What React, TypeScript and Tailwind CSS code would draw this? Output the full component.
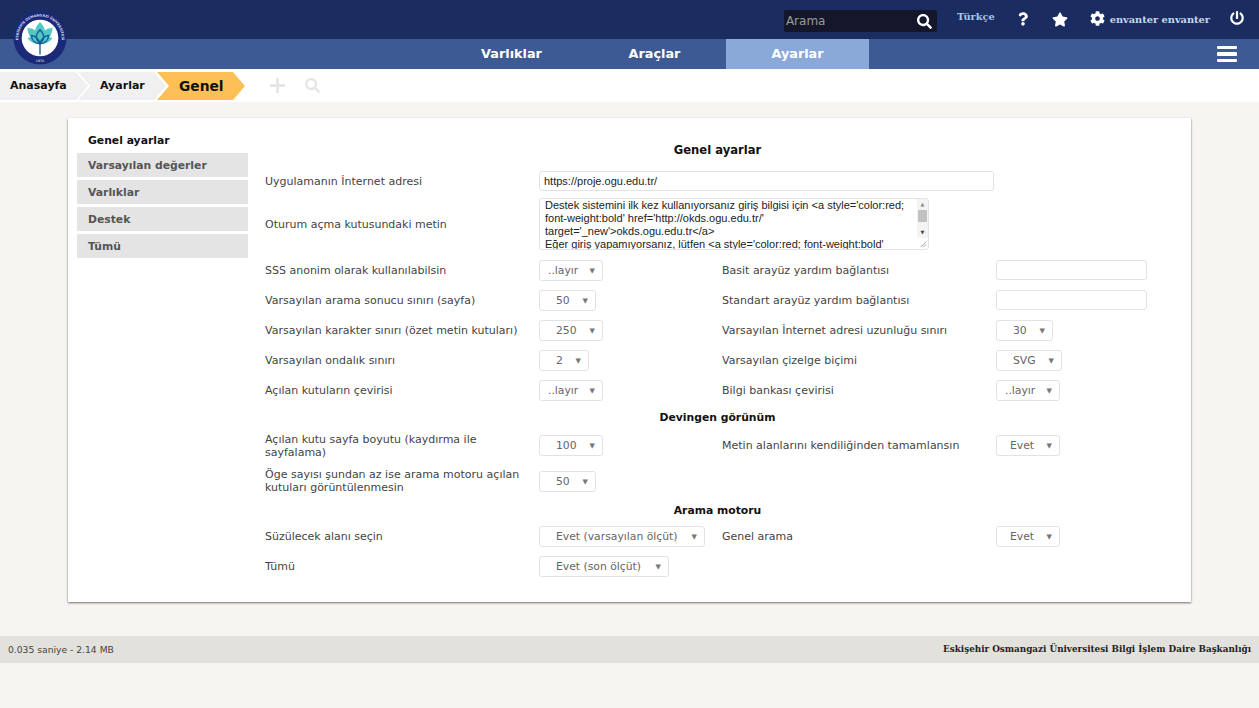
import { FaCog, FaPowerOff, FaQuestion, FaSearch, FaStar } from 'react-icons/fa'

const sans = "font-['DejaVu_Sans',Verdana,sans-serif]"
const serif = "font-['DejaVu_Serif',serif]"

const sideItems = ['Varsayılan değerler', 'Varlıklar', 'Destek', 'Tümü']

function Logo() {
  return (
    <svg viewBox="0 0 56 56" className="w-[54px] h-[54px]">
      <defs>
        <path id="ring" d="M 9.5 41 A 22.5 22.5 0 1 1 46.5 41" fill="none" />
      </defs>
      <circle cx="28" cy="28" r="27.5" fill="#1a2a78" />
      <circle cx="28" cy="28" r="19" fill="#fff" />
      <text fontSize="3.5" fill="#d5dcf2" fontFamily="DejaVu Sans" fontWeight="bold" textAnchor="middle">
        <textPath href="#ring" startOffset="50%">ESKİŞEHİR OSMANGAZİ ÜNİVERSİTESİ</textPath>
      </text>
      <text x="28" y="52.5" fontSize="3.4" fill="#fff" textAnchor="middle" fontFamily="DejaVu Sans">1970</text>
      <path d="M28 11.5c2.6 2.6 4.6 5.4 5 8.6 2.4-1.6 5.2-2.4 8-2.4-.2 3.6-1.2 7-3.4 9.6 1.2 0 2.4.2 3.4.6-2.6 4-6.4 6-10.6 6.2h-4.8c-4.200-.2-8-2.200-10.600-6.200 1-.4 2.200-.6 3.400-.6-2.200-2.600-3.200-6-3.400-9.600 2.800 0 5.600.8 8 2.400.4-3.200 2.400-6 5-8.600z" fill="#52c8c4" />
      <path d="M28 19.500c2.200 2.200 3.800 4.800 3.800 7.500 0 2.300-1.500 4.500-3.800 6.500-2.300-2-3.800-4.200-3.800-6.500 0-2.700 1.600-5.300 3.800-7.500zM19 25.500c3.800.3 7.200 3.200 9 8 1.800-4.800 5.200-7.700 9-8-.6 5-4 8.500-9 8.500s-8.400-3.500-9-8.500z" fill="none" stroke="#17609a" strokeWidth="1.500" />
      <path d="M27.300 33h1.400v12h-1.400z" fill="#17609a" />
    </svg>
  )
}

function Select({ value, width, pad = 'pl-[16px]' }: { value: string; width: string; pad?: string }) {
  return (
    <div className={`${width} ${pad} h-[21px] pt-[2px] flex items-center justify-between pr-[7px] bg-white border border-[#e2e2e2] rounded-[3px] text-[10.8px] text-[#666666] whitespace-nowrap shrink-0`}>
      <span>{value}</span>
      <span className="text-[7px] text-[#777777] pl-[4px]">▼</span>
    </div>
  )
}

function TextField({ width, value }: { width: string; value?: string }) {
  return (
    <input
      readOnly
      value={value ?? ''}
      className={`${width} h-[20px] px-[4px] bg-white border border-[#e2e2e2] rounded-[3px] text-[11px] text-[#222222] font-['Liberation_Sans',Arial,sans-serif] outline-none`}
    />
  )
}

function Label({ children, width }: { children: React.ReactNode; width: string }) {
  return <div className={`${width} shrink-0 text-[11px] leading-[13px] text-[#444444]`}>{children}</div>
}

function Row({ left, field, right, rightField, height = 'h-[30px]' }: {
  left: React.ReactNode
  field: React.ReactNode
  right?: React.ReactNode
  rightField?: React.ReactNode
  height?: string
}) {
  return (
    <div className={`flex items-center ${height}`}>
      <Label width="w-[274px]">{left}</Label>
      <div className="w-[183px] shrink-0 flex">{field}</div>
      {right && <Label width="w-[274px]">{right}</Label>}
      {rightField}
    </div>
  )
}

function Heading({ children, className }: { children: React.ReactNode; className: string }) {
  return <div className={`text-center font-bold text-[10.8px] text-[#111111] w-[905px] ${className}`}>{children}</div>
}

const loginText = `Destek sistemini ilk kez kullanıyorsanız giriş bilgisi için <a style='color:red; font-weight:bold' href='http://okds.ogu.edu.tr/' target='_new'>okds.ogu.edu.tr</a>
Eğer giriş yapamıyorsanız, lütfen <a style='color:red; font-weight:bold'`

export default function App() {
  return (
    <div className={`min-h-[708px] bg-[#f6f5f1] ${sans}`}>
      <header className="relative">
        <div className="h-[39px] bg-[#1b2d60] flex items-center justify-end">
          <div className="w-[153px] h-[22px] mt-[3px] bg-[#14172b] rounded-[2px] flex items-center justify-between pl-[2px] pr-[5px] text-[12px] text-[#9a9a9a]">
            Arama
            <FaSearch className="text-white w-[15px] h-[15px]" />
          </div>
          <span className={`${serif} ml-[20px] text-[9.8px] font-bold text-[#a9c4ea] mb-[5px]`}>Türkçe</span>
          <FaQuestion className="ml-[23px] text-white w-[10px] h-[14px] mb-[1px]" />
          <FaStar className="ml-[24px] text-white w-[16px] h-[15px]" />
          <FaCog className="ml-[22px] text-white w-[15px] h-[15px] mb-[3px]" />
          <span className={`${serif} ml-[5px] text-[9.8px] font-bold text-[#c9d6ee] mt-[1px]`}>envanter envanter</span>
          <FaPowerOff className="ml-[20px] mr-[15px] text-white w-[14px] h-[14px] mb-[4px]" />
        </div>
        <nav className="h-[30px] bg-[#3e5a94] flex text-white font-bold text-[12.8px]">
          <div className="w-[440px]" />
          <div className="w-[143px] flex items-center justify-center">Varlıklar</div>
          <div className="w-[143px] flex items-center justify-center">Araçlar</div>
          <div className="w-[143px] bg-[#8aa8d8] flex items-center justify-center">Ayarlar</div>
          <div className="ml-auto mr-[22px] flex flex-col justify-center gap-[3px]">
            <span className="block w-[20px] h-[3.5px] bg-white rounded-[1px]" />
            <span className="block w-[20px] h-[3.5px] bg-white rounded-[1px]" />
            <span className="block w-[20px] h-[3.5px] bg-white rounded-[1px]" />
          </div>
        </nav>
        <div className="absolute left-[13px] top-[11px]">
          <Logo />
        </div>
      </header>

      <div className="h-[33px] bg-white flex items-center">
        <div className="h-[28px] mt-[1px] w-[245px] flex text-[11px] font-bold text-[#111111]">
          <div className="w-[88px] h-full bg-[#f0f0f0] [clip-path:polygon(0_0,76px_0,88px_50%,76px_100%,0_100%)] flex items-center pl-[10px]">Anasayfa</div>
          <div className="w-[88px] -ml-[10px] h-full bg-[#f0f0f0] [clip-path:polygon(0_0,76px_0,88px_50%,76px_100%,0_100%,12px_50%)] flex items-center pl-[22px]">Ayarlar</div>
          <div className="w-[88px] -ml-[9px] h-full bg-[#fdc056] [clip-path:polygon(0_0,76px_0,88px_50%,76px_100%,0_100%,12px_50%)] flex items-center pl-[22px] text-[13.8px]">Genel</div>
        </div>
        <svg viewBox="0 0 16 16" className="ml-[25px] w-[15px] h-[15px]">
          <path d="M6.500 0h3v6.500H16v3H9.500V16h-3V9.500H0v-3h6.500z" fill="#e6e6e6" />
        </svg>
        <FaSearch className="ml-[20px] w-[15px] h-[15px] text-[#e6e6e6]" />
      </div>

      <main className="mt-[16px] ml-[68px] w-[1123px] h-[484px] bg-white shadow-[0_1px_2px_rgba(0,0,0,0.55)] flex">
        <aside className="w-[171px] ml-[9px] pt-[14px] shrink-0 text-[10.8px] font-bold">
          <div className="h-[18px] mb-[3px] pl-[11px] text-[#111111] flex items-center">Genel ayarlar</div>
          <div className="flex flex-col gap-[3px]">
            {sideItems.map((item) => (
              <div key={item} className="h-[24px] pl-[11px] pt-[2px] bg-[#e4e4e4] text-[#555555] flex items-center">
                {item}
              </div>
            ))}
          </div>
        </aside>

        <section className="ml-[17px] pt-[25px]">
          <Heading className="leading-[14px] mb-[12px] text-[11.6px]">Genel ayarlar</Heading>
          <Row left="Uygulamanın İnternet adresi" field={<TextField width="w-[455px] shrink-0" value="https://proje.ogu.edu.tr/" />} height="h-[24px]" />
          <div className="flex items-center h-[60px] mt-[1px]">
            <Label width="w-[274px]">Oturum açma kutusundaki metin</Label>
            <div className="relative w-[390px] h-[52px] bg-white border border-[#e2e2e2] rounded-[3px] overflow-hidden">
              <textarea
                readOnly
                defaultValue={loginText}
                className="block w-[376px] h-[50px] pl-[5px] resize-none overflow-hidden outline-none text-[11px] leading-[13px] text-[#222222] font-['Liberation_Sans',Arial,sans-serif]"
              />
              <div className="absolute right-0 top-0 w-[11px] h-[39px] bg-[#f4f4f4] flex flex-col items-center justify-between py-[3px]">
                <span className="text-[5px] leading-[5px] text-[#888888]">▲</span>
                <span className="absolute top-[11px] w-[9px] h-[12px] bg-[#c1c1c1]" />
                <span className="text-[5px] leading-[5px] text-[#444444]">▼</span>
              </div>
              <svg viewBox="0 0 10 10" className="absolute right-[1px] bottom-[1px] w-[9px] h-[9px]">
                <path d="M9 3L3 9M9 6L6 9" stroke="#999999" strokeWidth="1" />
              </svg>
            </div>
          </div>
          <div className="mt-[1px]">
            <Row left="SSS anonim olarak kullanılabilsin" field={<Select value="..layır" width="w-[64px]" pad="pl-[8px]" />} right="Basit arayüz yardım bağlantısı" rightField={<TextField width="w-[151px]" />} />
            <Row left="Varsayılan arama sonucu sınırı (sayfa)" field={<Select value="50" width="w-[57px]" />} right="Standart arayüz yardım bağlantısı" rightField={<TextField width="w-[151px]" />} />
            <Row left="Varsayılan karakter sınırı (özet metin kutuları)" field={<Select value="250" width="w-[64px]" />} right="Varsayılan İnternet adresi uzunluğu sınırı" rightField={<Select value="30" width="w-[57px]" />} />
            <Row left="Varsayılan ondalık sınırı" field={<Select value="2" width="w-[50px]" />} right="Varsayılan çizelge biçimi" rightField={<Select value="SVG" width="w-[66px]" />} />
            <Row left="Açılan kutuların çevirisi" field={<Select value="..layır" width="w-[64px]" pad="pl-[8px]" />} right="Bilgi bankası çevirisi" rightField={<Select value="..layır" width="w-[64px]" pad="pl-[8px]" />} />
          </div>
          <Heading className="leading-[14px] mt-[6px] mb-[2px]">Devingen görünüm</Heading>
          <Row left={<span className="block w-[255px]">Açılan kutu sayfa boyutu (kaydırma ile sayfalama)</span>} field={<Select value="100" width="w-[64px]" />} right="Metin alanlarını kendiliğinden tamamlansın" rightField={<Select value="Evet" width="w-[64px]" pad="pl-[13px]" />} height="h-[37px]" />
          <Row left={<span className="block w-[258px]">Öge sayısı şundan az ise arama motoru açılan kutuları görüntülenmesin</span>} field={<Select value="50" width="w-[57px]" />} height="h-[34px]" />
          <Heading className="leading-[14px] mt-[6px] mb-[3px]">Arama motoru</Heading>
          <Row left="Süzülecek alanı seçin" field={<Select value="Evet (varsayılan ölçüt)" width="w-[166px]" />} right="Genel arama" rightField={<Select value="Evet" width="w-[64px]" pad="pl-[13px]" />} />
          <Row left="Tümü" field={<Select value="Evet (son ölçüt)" width="w-[130px]" />} />
        </section>
      </main>

      <footer className="mt-[34px] h-[27px] bg-[#e2e1dc] flex items-center justify-between px-[8px]">
        <span className="text-[9.2px] text-[#444444]">0.035 saniye - 2.14 MB</span>
        <span className={`${serif} text-[8.8px] font-bold text-[#222222]`}>Eskişehir Osmangazi Üniversitesi Bilgi İşlem Daire Başkanlığı</span>
      </footer>
    </div>
  )
}
